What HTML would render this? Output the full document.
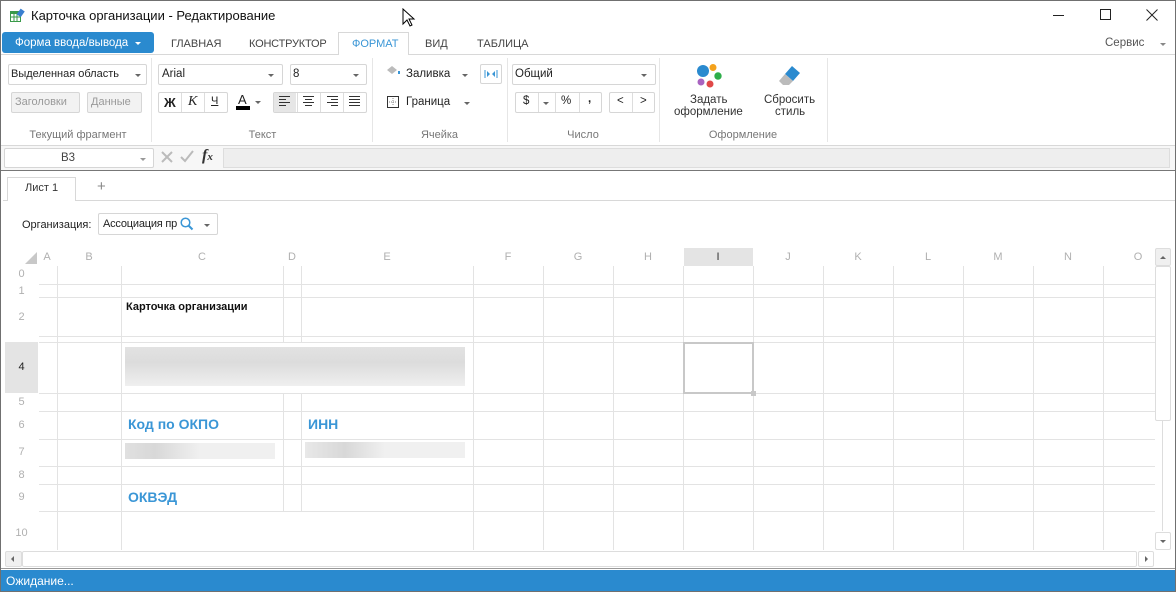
<!DOCTYPE html>
<html><head><meta charset="utf-8"><style>
*{box-sizing:border-box;margin:0;padding:0}
body{width:1176px;height:592px;position:relative;overflow:hidden;background:#fff;font-family:"Liberation Sans","DejaVu Sans",sans-serif;font-size:11.5px;color:#222}
.a{position:absolute}
.t{position:absolute;white-space:nowrap}
.box{position:absolute;border:1px solid #d6d6d6;border-radius:2px;background:#fff}
.dd{position:absolute;width:0;height:0;border-left:3px solid transparent;border-right:3px solid transparent;border-top:3px solid #666}
.grp{position:absolute;top:129px;color:#777;font-size:11px;text-align:center}
.vs{position:absolute;top:58px;width:1px;height:84px;background:#e6e6e6}
.hl{position:absolute;height:1px;background:#e3e3e3}
.vl{position:absolute;width:1px;background:#e3e3e3}
.ch{position:absolute;top:251px;color:#b0b0b0;font-size:11px;text-align:center;width:70px}
.rh{position:absolute;left:5px;width:33px;text-align:center;color:#b0b0b0;font-size:11px}
.blue{color:#3a96d6;font-weight:bold;font-size:14px}
.tab{font-size:11px;color:#444;top:38px}
</style></head><body>
<div class="a" style="left:0;top:0;width:1176px;height:592px;border:1px solid #707070;z-index:50;pointer-events:none"></div>
<svg class="a" style="left:9px;top:8px" width="16" height="16"><rect x="1" y="3" width="11" height="11" fill="#3a9a4a"/><rect x="2" y="6" width="9" height="7" fill="#fff"/><path d="M2 9h9M5 6v7M8 6v7" stroke="#3a9a4a"/><rect x="9" y="1" width="5" height="7" fill="#3a7fd0" transform="rotate(35 11 5)"/></svg>
<div class="t" style="left:31px;top:8px;font-size:13px;color:#111">Карточка организации - Редактирование</div>
<svg class="a" style="left:402px;top:8px" width="14" height="20"><path d="M1 1v15l4-4 3 6 2-1-3-6h5z" fill="#fff" stroke="#000"/></svg>
<div class="a" style="left:1053px;top:15px;width:11px;height:1px;background:#222"></div>
<div class="a" style="left:1100px;top:9px;width:11px;height:11px;border:1px solid #222"></div>
<svg class="a" style="left:1146px;top:9px" width="12" height="12"><path d="M0.5 0.5l11 11M11.5 0.5l-11 11" stroke="#222"/></svg>
<div class="a" style="left:2px;top:32px;width:152px;height:21px;background:#2a8acf;border-radius:3px"></div>
<div class="t" style="left:15px;top:37px;color:#fff;font-size:11.5px">Форма ввода/вывода</div>
<div class="dd" style="left:135px;top:42px;border-top-color:#fff"></div>
<div class="t tab" style="left:171px">ГЛАВНАЯ</div>
<div class="t tab" style="left:249px;letter-spacing:-0.2px">КОНСТРУКТОР</div>
<div class="a" style="left:338px;top:32px;width:71px;height:23px;border:1px solid #d8d8d8;border-bottom:none;background:#fff;z-index:2"></div>
<div class="t tab" style="left:352px;color:#3a96d6;z-index:3">ФОРМАТ</div>
<div class="t tab" style="left:425px">ВИД</div>
<div class="t tab" style="left:477px">ТАБЛИЦА</div>
<div class="t" style="left:1105px;top:37px;color:#555">Сервис</div>
<div class="dd" style="left:1160px;top:43px;border-top-color:#888"></div>
<div class="a" style="left:1px;top:54px;width:1174px;height:1px;background:#d8d8d8"></div>
<div class="box" style="left:8px;top:64px;width:139px;height:21px"></div>
<div class="t" style="left:11px;top:68px;font-size:11px">Выделенная область</div><div class="dd" style="left:135px;top:74px"></div>
<div class="box" style="left:11px;top:92px;width:69px;height:21px;background:#f2f2f2"></div><div class="t" style="left:15px;top:96px;color:#999;font-size:11px">Заголовки</div>
<div class="box" style="left:87px;top:92px;width:55px;height:21px;background:#f2f2f2"></div><div class="t" style="left:91px;top:96px;color:#999;font-size:11px">Данные</div>
<div class="grp" style="left:8px;width:140px">Текущий фрагмент</div>
<div class="vs" style="left:151px"></div>
<div class="box" style="left:158px;top:64px;width:125px;height:21px"></div><div class="t" style="left:162px;top:68px">Arial</div><div class="dd" style="left:268px;top:74px"></div>
<div class="box" style="left:290px;top:64px;width:77px;height:21px"></div><div class="t" style="left:293px;top:68px">8</div><div class="dd" style="left:353px;top:74px"></div>
<div class="box" style="left:158px;top:92px;width:70px;height:21px"></div>
<div class="a" style="left:181px;top:93px;width:1px;height:19px;background:#ddd"></div><div class="a" style="left:204px;top:93px;width:1px;height:19px;background:#ddd"></div>
<div class="t" style="left:164px;top:95px;font-weight:bold;font-size:13px">Ж</div>
<div class="t" style="left:188px;top:94px;font-style:italic;font-family:'Liberation Serif',serif;font-size:14px">К</div>
<div class="t" style="left:211px;top:95px;text-decoration:underline;font-size:11px">Ч</div>
<div class="t" style="left:238px;top:92px;font-size:13px">A</div><div class="a" style="left:236px;top:106px;width:14px;height:4px;background:#000"></div><div class="dd" style="left:255px;top:101px"></div>
<div class="box" style="left:273px;top:92px;width:94px;height:21px"></div>
<div class="a" style="left:274px;top:93px;width:22px;height:19px;background:#e6e6e6"></div>
<svg class="a" style="left:279px;top:96px" width="85" height="12" stroke="#333"><path d="M0 .5h11M0 3.5h7M0 6.5h11M0 9.5h7"/><path d="M24 .5h11M26 3.5h7M24 6.5h11M26 9.5h7"/><path d="M48 .5h11M52 3.5h7M48 6.5h11M52 9.5h7"/><path d="M70 .5h11M70 3.5h11M70 6.5h11M70 9.5h11"/></svg>
<div class="a" style="left:297px;top:93px;width:1px;height:19px;background:#ddd"></div><div class="a" style="left:320px;top:93px;width:1px;height:19px;background:#ddd"></div><div class="a" style="left:343px;top:93px;width:1px;height:19px;background:#ddd"></div>
<div class="grp" style="left:155px;width:215px">Текст</div>
<div class="vs" style="left:372px"></div>
<svg class="a" style="left:386px;top:65px" width="16" height="12"><path d="M1 5l5-4 5 4-5 4z" fill="#bbb"/><path d="M13 6v3" stroke="#3a96d6" stroke-width="2"/></svg>
<div class="t" style="left:406px;top:68px">Заливка</div><div class="dd" style="left:462px;top:74px"></div>
<div class="box" style="left:480px;top:64px;width:22px;height:20px"></div>
<svg class="a" style="left:483px;top:69px" width="16" height="10"><path d="M2 1v8M14 1v8" stroke="#3a96d6"/><path d="M4 2l3 3-3 3zM12 2l-3 3 3 3z" fill="#3a96d6"/></svg>
<svg class="a" style="left:387px;top:96px" width="12" height="12"><rect x="0.5" y="0.5" width="11" height="11" fill="none" stroke="#333"/><path d="M6 2v8M2 6h8" stroke="#888" stroke-dasharray="1 1"/></svg>
<div class="t" style="left:406px;top:96px">Граница</div><div class="dd" style="left:464px;top:102px"></div>
<div class="grp" style="left:372px;width:135px">Ячейка</div>
<div class="vs" style="left:507px"></div>
<div class="box" style="left:512px;top:64px;width:144px;height:21px"></div><div class="t" style="left:515px;top:68px">Общий</div><div class="dd" style="left:641px;top:74px"></div>
<div class="box" style="left:515px;top:92px;width:87px;height:21px"></div>
<div class="a" style="left:538px;top:93px;width:1px;height:19px;background:#ddd"></div><div class="a" style="left:555px;top:93px;width:1px;height:19px;background:#ddd"></div><div class="a" style="left:579px;top:93px;width:1px;height:19px;background:#ddd"></div>
<div class="t" style="left:523px;top:95px">$</div><div class="dd" style="left:543px;top:102px"></div><div class="t" style="left:561px;top:95px">%</div><div class="t" style="left:588px;top:93px;font-weight:bold">,</div>
<div class="box" style="left:609px;top:92px;width:46px;height:21px"></div><div class="a" style="left:632px;top:93px;width:1px;height:19px;background:#ddd"></div>
<div class="t" style="left:617px;top:95px">&lt;</div><div class="t" style="left:640px;top:95px">&gt;</div>
<div class="grp" style="left:507px;width:152px">Число</div>
<div class="vs" style="left:659px"></div>
<svg class="a" style="left:694px;top:63px" width="32" height="28"><circle cx="9" cy="8" r="6" fill="#2a8acf"/><circle cx="19" cy="4.5" r="3.5" fill="#f4a21c"/><circle cx="24" cy="13" r="3.7" fill="#2fae4a"/><circle cx="7" cy="19" r="3.5" fill="#a863c0"/><circle cx="16" cy="21" r="3.5" fill="#e04848"/></svg>
<div class="t" style="left:690px;top:94px;color:#333">Задать</div><div class="t" style="left:674px;top:106px;color:#333">оформление</div>
<svg class="a" style="left:777px;top:64px" width="26" height="22"><path d="M15 2l8 7-7 8-8-7z" fill="#2a8acf"/><path d="M8 10l8 7-4 4H6l-4-4z" fill="#bbb"/></svg>
<div class="t" style="left:764px;top:94px;color:#333">Сбросить</div><div class="t" style="left:775px;top:106px;color:#333">стиль</div>
<div class="grp" style="left:659px;width:168px">Оформление</div>
<div class="vs" style="left:827px"></div>
<div class="a" style="left:1px;top:145px;width:1174px;height:1px;background:#d8d8d8"></div>
<div class="a" style="left:1px;top:146px;width:1174px;height:24px;background:#f7f7f7"></div>
<div class="box" style="left:4px;top:148px;width:150px;height:20px"></div><div class="t" style="left:61px;top:152px;color:#444">B3</div><div class="dd" style="left:140px;top:158px;border-top-color:#999"></div>
<svg class="a" style="left:161px;top:151px" width="12" height="12"><path d="M1 1l10 10M11 1L1 11" stroke="#bbb" stroke-width="2"/></svg>
<svg class="a" style="left:180px;top:150px" width="14" height="13"><path d="M1 7l4 4 8-10" stroke="#bbb" stroke-width="2" fill="none"/></svg>
<div class="t" style="left:202px;top:147px;font-family:'Liberation Serif',serif;font-style:italic;font-size:16px;font-weight:bold;color:#333">f<span style="font-size:11px">x</span></div>
<div class="a" style="left:223px;top:148px;width:947px;height:20px;background:#eeeeee;border:1px solid #ddd"></div>
<div class="a" style="left:1px;top:170px;width:1174px;height:1px;background:#777"></div>
<div class="a" style="left:7px;top:177px;width:69px;height:24px;border:1px solid #d8d8d8;border-bottom:none;background:#fff"></div>
<div class="t" style="left:25px;top:182px;font-size:11px;color:#333">Лист 1</div>
<div class="t" style="left:97px;top:178px;font-size:15px;color:#888">+</div>
<div class="a" style="left:76px;top:200px;width:1099px;height:1px;background:#d8d8d8"></div>
<div class="a" style="left:3px;top:200px;width:4px;height:1px;background:#d8d8d8"></div>
<div class="t" style="left:22px;top:219px;color:#222;font-size:11px">Организация:</div>
<div class="box" style="left:98px;top:213px;width:120px;height:22px"></div>
<div class="t" style="left:103px;top:218px;color:#222;font-size:11px;letter-spacing:-0.2px">Ассоциация пр</div>
<svg class="a" style="left:180px;top:217px" width="14" height="14"><circle cx="5.5" cy="5.5" r="4.3" stroke="#3a96d6" stroke-width="1.5" fill="none"/><path d="M8.5 8.5l4 4" stroke="#3a96d6" stroke-width="2"/></svg>
<div class="dd" style="left:204px;top:224px"></div>
<svg class="a" style="left:25px;top:252px" width="12" height="12"><path d="M12 0v12H0z" fill="#c8c8c8"/></svg>
<div class="a" style="left:684px;top:248px;width:69px;height:18px;background:#e4e4e4"></div>
<div class="a" style="left:5px;top:342px;width:33px;height:51px;background:#e4e4e4"></div>
<div class="ch" style="left:12px;width:70px">A</div>
<div class="ch" style="left:54px">B</div>
<div class="ch" style="left:167px">C</div>
<div class="ch" style="left:257px">D</div>
<div class="ch" style="left:352px">E</div>
<div class="ch" style="left:473px">F</div>
<div class="ch" style="left:543px">G</div>
<div class="ch" style="left:613px">H</div>
<div class="ch" style="left:683px;color:#333">I</div>
<div class="ch" style="left:753px">J</div>
<div class="ch" style="left:823px">K</div>
<div class="ch" style="left:893px">L</div>
<div class="ch" style="left:963px">M</div>
<div class="ch" style="left:1033px">N</div>
<div class="ch" style="left:1103px">O</div>
<div class="rh" style="top:268px">0</div>
<div class="rh" style="top:285px">1</div>
<div class="rh" style="top:311px">2</div>
<div class="rh" style="top:361px;color:#222">4</div>
<div class="rh" style="top:396px">5</div>
<div class="rh" style="top:419px">6</div>
<div class="rh" style="top:446px">7</div>
<div class="rh" style="top:469px">8</div>
<div class="rh" style="top:491px">9</div>
<div class="rh" style="top:527px">10</div>
<div class="hl" style="left:39px;top:284px;width:1116px"></div>
<div class="hl" style="left:39px;top:297px;width:1116px"></div>
<div class="hl" style="left:39px;top:336px;width:1116px"></div>
<div class="hl" style="left:39px;top:342px;width:1116px"></div>
<div class="hl" style="left:39px;top:393px;width:1116px"></div>
<div class="hl" style="left:39px;top:411px;width:1116px"></div>
<div class="hl" style="left:39px;top:439px;width:1116px"></div>
<div class="hl" style="left:39px;top:466px;width:1116px"></div>
<div class="hl" style="left:39px;top:484px;width:1116px"></div>
<div class="hl" style="left:39px;top:511px;width:1116px"></div>
<div class="vl" style="left:57px;top:266px;height:284px"></div>
<div class="vl" style="left:121px;top:266px;height:284px"></div>
<div class="vl" style="left:283px;top:266px;height:76px"></div>
<div class="vl" style="left:301px;top:266px;height:76px"></div>
<div class="vl" style="left:283px;top:393px;height:118px"></div>
<div class="vl" style="left:301px;top:393px;height:118px"></div>
<div class="vl" style="left:473px;top:266px;height:284px"></div>
<div class="vl" style="left:543px;top:266px;height:284px"></div>
<div class="vl" style="left:613px;top:266px;height:284px"></div>
<div class="vl" style="left:683px;top:266px;height:284px"></div>
<div class="vl" style="left:753px;top:266px;height:284px"></div>
<div class="vl" style="left:823px;top:266px;height:284px"></div>
<div class="vl" style="left:893px;top:266px;height:284px"></div>
<div class="vl" style="left:963px;top:266px;height:284px"></div>
<div class="vl" style="left:1033px;top:266px;height:284px"></div>
<div class="vl" style="left:1103px;top:266px;height:284px"></div>
<div class="t" style="left:126px;top:301px;font-weight:bold;font-size:11px;color:#111">Карточка организации</div>
<div class="a" style="left:125px;top:347px;width:340px;height:39px;background:linear-gradient(180deg,#e2e2e2 0%,#dcdcdc 40%,#efefef 100%)"></div>
<div class="t blue" style="left:128px;top:416px">Код по ОКПО</div>
<div class="t blue" style="left:308px;top:416px">ИНН</div>
<div class="a" style="left:125px;top:443px;width:150px;height:16px;background:linear-gradient(90deg,#e0e0e0,#d8d8d8 20%,#f0f0f0 50%,#f0f0f0)"></div>
<div class="a" style="left:305px;top:442px;width:160px;height:16px;background:linear-gradient(90deg,#e8e8e8,#d8d8d8 25%,#f0f0f0 50%,#f0f0f0)"></div>
<div class="t blue" style="left:128px;top:489px">ОКВЭД</div>
<div class="a" style="left:683px;top:342px;width:71px;height:52px;border:2px solid #c8c8c8"></div>
<div class="a" style="left:751px;top:391px;width:5px;height:5px;background:#c8c8c8"></div>
<div class="a" style="left:1155px;top:248px;width:16px;height:18px;border:1px solid #ddd;background:#f0f0f0;border-radius:2px"></div>
<div class="dd" style="left:1160px;top:256px;border-top:none;border-bottom:3px solid #666"></div>
<div class="a" style="left:1155px;top:266px;width:16px;height:155px;border:1px solid #ddd;border-radius:2px;background:#fff"></div>
<div class="a" style="left:1162px;top:421px;width:1px;height:110px;background:#ddd"></div>
<div class="a" style="left:1155px;top:532px;width:16px;height:18px;border:1px solid #ddd;border-radius:2px;background:#fff"></div>
<div class="dd" style="left:1160px;top:540px"></div>
<div class="a" style="left:5px;top:551px;width:17px;height:16px;border:1px solid #ddd;background:#f0f0f0;border-radius:2px"></div>
<div class="a" style="left:11px;top:556px;width:0;height:0;border-top:3px solid transparent;border-bottom:3px solid transparent;border-right:3px solid #666"></div>
<div class="a" style="left:22px;top:551px;width:1115px;height:16px;border:1px solid #ddd;border-radius:2px"></div>
<div class="a" style="left:1138px;top:551px;width:16px;height:16px;border:1px solid #ddd;border-radius:2px"></div>
<div class="a" style="left:1145px;top:556px;width:0;height:0;border-top:3px solid transparent;border-bottom:3px solid transparent;border-left:3px solid #666"></div>
<div class="a" style="left:1px;top:568px;width:1174px;height:1px;background:#999"></div>
<div class="a" style="left:1px;top:570px;width:1174px;height:22px;background:#2a8acf"></div>
<div class="t" style="left:6px;top:574px;color:#fff;font-size:12px">Ожидание...</div>
</body></html>
